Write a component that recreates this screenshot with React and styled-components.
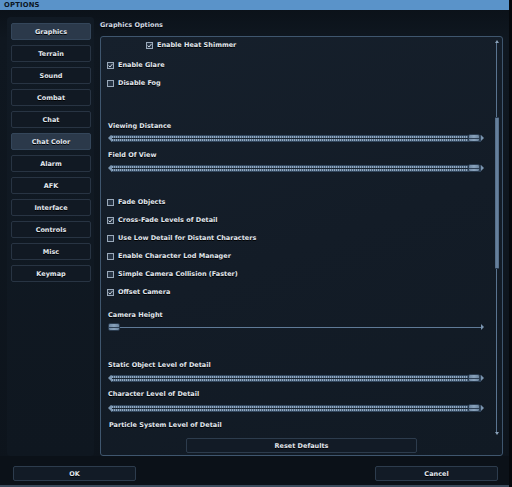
import React from 'react';
import styled, { createGlobalStyle } from 'styled-components';

const GlobalStyle = createGlobalStyle`
  html, body { margin: 0; padding: 0; background: #0c131b; }
  * { box-sizing: border-box; }
`;

const tabs = ['Graphics', 'Terrain', 'Sound', 'Combat', 'Chat', 'Chat Color', 'Alarm', 'AFK', 'Interface', 'Controls', 'Misc', 'Keymap'];
const selectedTabs = ['Graphics', 'Chat Color'];

// each item in the scroll list, with its gap above
const items = [
  { type: 'check', label: 'Enable Heat Shimmer', checked: true, mt: -1, indent: 39 },
  { type: 'check', label: 'Enable Glare', checked: true, mt: 2 },
  { type: 'check', label: 'Disable Fog', checked: false, mt: 0 },
  { type: 'label', label: 'Viewing Distance', mt: 28 },
  { type: 'slider', value: 1, mt: 1 },
  { type: 'label', label: 'Field Of View', mt: 6 },
  { type: 'slider', value: 1, mt: 2 },
  { type: 'check', label: 'Fade Objects', checked: false, mt: 20 },
  { type: 'check', label: 'Cross-Fade Levels of Detail', checked: true, mt: 0 },
  { type: 'check', label: 'Use Low Detail for Distant Characters', checked: false, mt: 0 },
  { type: 'check', label: 'Enable Character Lod Manager', checked: false, mt: 0 },
  { type: 'check', label: 'Simple Camera Collision (Faster)', checked: false, mt: 0 },
  { type: 'check', label: 'Offset Camera', checked: true, mt: 0 },
  { type: 'label', label: 'Camera Height', mt: 8 },
  { type: 'slider', value: 0, thin: true, mt: 1 },
  { type: 'label', label: 'Static Object Level of Detail', mt: 27 },
  { type: 'slider', value: 1, mt: 2 },
  { type: 'label', label: 'Character Level of Detail', mt: 5 },
  { type: 'slider', value: 1, mt: 3 },
  { type: 'label', label: 'Particle System Level of Detail', mt: 6, indent: 1 },
];

const font = `
  font-family: "DejaVu Sans", Verdana, sans-serif;
  font-weight: bold;
  font-size: 6.5px;
  letter-spacing: 0;
  color: #e2e8ef;
  text-shadow: 0 1px 0 #000;
`;

const Window = styled.div`
  width: 512px;
  height: 487px;
  display: flex;
  flex-direction: column;
  background: linear-gradient(180deg, #0a1017 0%, #0f1720 8%, #0d141c 100%);
  overflow: hidden;
  border-right: 3px solid #05080c;
`;

const TitleBar = styled.div`
  height: 10px;
  flex: none;
  background: #5a93c9;
  padding-left: 4px;
  line-height: 10px;
  font-family: "DejaVu Sans", Verdana, sans-serif;
  font-weight: bold;
  font-size: 6.8px;
  letter-spacing: 0.2px;
  color: #0b1523;
`;

const Body = styled.div`
  flex: 1;
  display: flex;
  padding: 7px 6px 0 7px;
  min-height: 0;
`;

const Sidebar = styled.div`
  width: 87px;
  flex: none;
  display: flex;
  flex-direction: column;
  gap: 5px;
  padding: 6px 3px 0 4px;
  background: linear-gradient(180deg, #111a24 0%, #0f1720 100%);
  border-radius: 4px;
`;

const TabButton = styled.div`
  height: 17px;
  display: flex;
  align-items: center;
  justify-content: center;
  ${font}
  background: ${p => (p.$active ? '#2b394a' : '#111923')};
  border: 1px solid ${p => (p.$active ? '#34465a' : '#283443')};
  border-radius: 2px;
`;

const Main = styled.div`
  flex: 1;
  margin-left: 6px;
  display: flex;
  flex-direction: column;
`;

const Heading = styled.div`
  height: 14px;
  line-height: 14px;
  padding-top: 1px;
  margin-bottom: 5px;
  ${font}
  color: #d3dbe4;
`;

const Panel = styled.div`
  flex: 1;
  display: flex;
  flex-direction: column;
  border: 1px solid #3f566e;
  border-radius: 3px;
  background: linear-gradient(160deg, #16202c 0%, #131c27 50%, #111a24 100%);
`;

const ScrollArea = styled.div`
  height: 398px;
  display: flex;
`;

const Content = styled.div`
  flex: 1;
  overflow: hidden;
  padding-left: 6px;
`;

const CheckRow = styled.div`
  height: 18px;
  display: flex;
  align-items: center;
  gap: 4px;
  margin-top: ${p => p.$mt}px;
  padding-left: ${p => p.$indent || 0}px;
  ${font}
`;

const Box = styled.svg`
  width: 7px;
  height: 7px;
  flex: none;
`;

const Label = styled.div`
  height: 12px;
  line-height: 12px;
  margin-top: ${p => p.$mt}px;
  padding-left: ${p => 1 + (p.$indent || 0)}px;
  ${font}
`;

const SliderRow = styled.div`
  width: 376px;
  height: 10px;
  margin: ${p => p.$mt}px 0 0 1px;
  display: flex;
  align-items: center;
`;

const Cap = styled.span`
  width: 0;
  height: 0;
  flex: none;
  border-top: 3px solid transparent;
  border-bottom: 3px solid transparent;
  border-${p => (p.$dir === 'left' ? 'right' : 'left')}: 3px solid #7b95b0;
`;

const Track = styled.div`
  flex: 1;
  position: relative;
  height: ${p => (p.$thin ? '1px' : '7px')};
  background: ${p =>
    p.$thin
      ? '#5f7a97'
      : `linear-gradient(#1a2633, #1a2633) center / 100% 1px no-repeat,
         repeating-linear-gradient(90deg, #91a8bf 0 1px, #4b637d 1px 2px)`};
  border: ${p => (p.$thin ? 'none' : '1px solid #30445a')};
  border-left: ${p => (p.$thin ? 'none' : '1px solid #7b95b0')};
`;

const Knob = styled.span`
  position: absolute;
  top: 50%;
  width: 12px;
  height: 8px;
  transform: translateY(-50%);
  border: 1px solid #2a3b4e;
  border-radius: 2px;
  background:
    linear-gradient(#2e4055, #2e4055) center / 100% 1px no-repeat,
    linear-gradient(90deg, #6d87a3, #89a2bb 50%, #6a849f);
`;

const Scrollbar = styled.div`
  width: 5px;
  margin: 3px 3px 0 3px;
  display: flex;
  flex-direction: column;
  align-items: center;
`;

const ScrollArrow = styled.span`
  width: 0;
  height: 0;
  flex: none;
  border-left: 2px solid transparent;
  border-right: 2px solid transparent;
  border-${p => (p.$dir === 'up' ? 'bottom' : 'top')}: 3px solid #8aa2ba;
`;

const Rail = styled.span`
  width: 1px;
  flex: ${p => (p.$grow ? 1 : 'none')};
  height: ${p => (p.$grow ? 'auto' : `${p.$h}px`)};
  background: #5a7490;
`;

const Thumb = styled.span`
  width: 4px;
  height: 152px;
  flex: none;
  background: linear-gradient(90deg, #4e6783, #6e88a4, #4e6783);
  border-top: 1px solid #2b3c50;
  border-bottom: 1px solid #2b3c50;
`;

const ResetBar = styled.div`
  flex: 1;
  display: flex;
  justify-content: center;
  padding-top: 3px;
`;

const Button = styled.div`
  width: ${p => p.$w}px;
  height: 15px;
  display: flex;
  align-items: center;
  justify-content: center;
  ${font}
  background: #121b26;
  border: 1px solid #2d3c4d;
  border-radius: 2px;
`;

const Footer = styled.div`
  height: 31px;
  flex: none;
  display: flex;
  justify-content: space-between;
  padding: 10px 11px 0 13px;
  background: #0b1118;
  border-bottom: 2px solid #3b4b5c;
`;

const Checkbox = ({ checked }) => (
  <Box viewBox="0 0 7 7">
    <rect x="0.5" y="0.5" width="6" height="6" fill="#263343" stroke="#9aa9ba" strokeWidth="1" />
    {checked && <path d="M1.6 3.6 L3 5 L5.6 1.8" fill="none" stroke="#c9d3de" strokeWidth="1" />}
  </Box>
);

const Slider = ({ value, thin, mt }) => (
  <SliderRow $mt={mt}>
    {!thin && <Cap $dir="left" />}
    <Track $thin={thin}>
      <Knob style={{ left: `calc(${value * 100}% - ${value * 12}px)` }} />
    </Track>
    <Cap $dir="right" />
  </SliderRow>
);

const App = () => {
  return (
    <>
      <GlobalStyle />
      <Window>
        <TitleBar>OPTIONS</TitleBar>
        <Body>
          <Sidebar>
            {tabs.map(t => (
              <TabButton key={t} $active={selectedTabs.includes(t)}>{t}</TabButton>
            ))}
          </Sidebar>
          <Main>
            <Heading>Graphics Options</Heading>
            <Panel>
              <ScrollArea>
                <Content>
                  {items.map((it, i) => {
                    if (it.type === 'check') {
                      return (
                        <CheckRow key={i} $mt={it.mt} $indent={it.indent}>
                          <Checkbox checked={it.checked} />
                          {it.label}
                        </CheckRow>
                      );
                    }
                    if (it.type === 'label') {
                      return <Label key={i} $mt={it.mt} $indent={it.indent}>{it.label}</Label>;
                    }
                    return <Slider key={i} value={it.value} thin={it.thin} mt={it.mt} />;
                  })}
                </Content>
                <Scrollbar>
                  <ScrollArrow $dir="up" />
                  <Rail $h={74} />
                  <Thumb />
                  <Rail $grow />
                  <ScrollArrow $dir="down" />
                </Scrollbar>
              </ScrollArea>
              <ResetBar>
                <Button $w={231}>Reset Defaults</Button>
              </ResetBar>
            </Panel>
          </Main>
        </Body>
        <Footer>
          <Button $w={123}>OK</Button>
          <Button $w={123}>Cancel</Button>
        </Footer>
      </Window>
    </>
  );
};

export default App;
